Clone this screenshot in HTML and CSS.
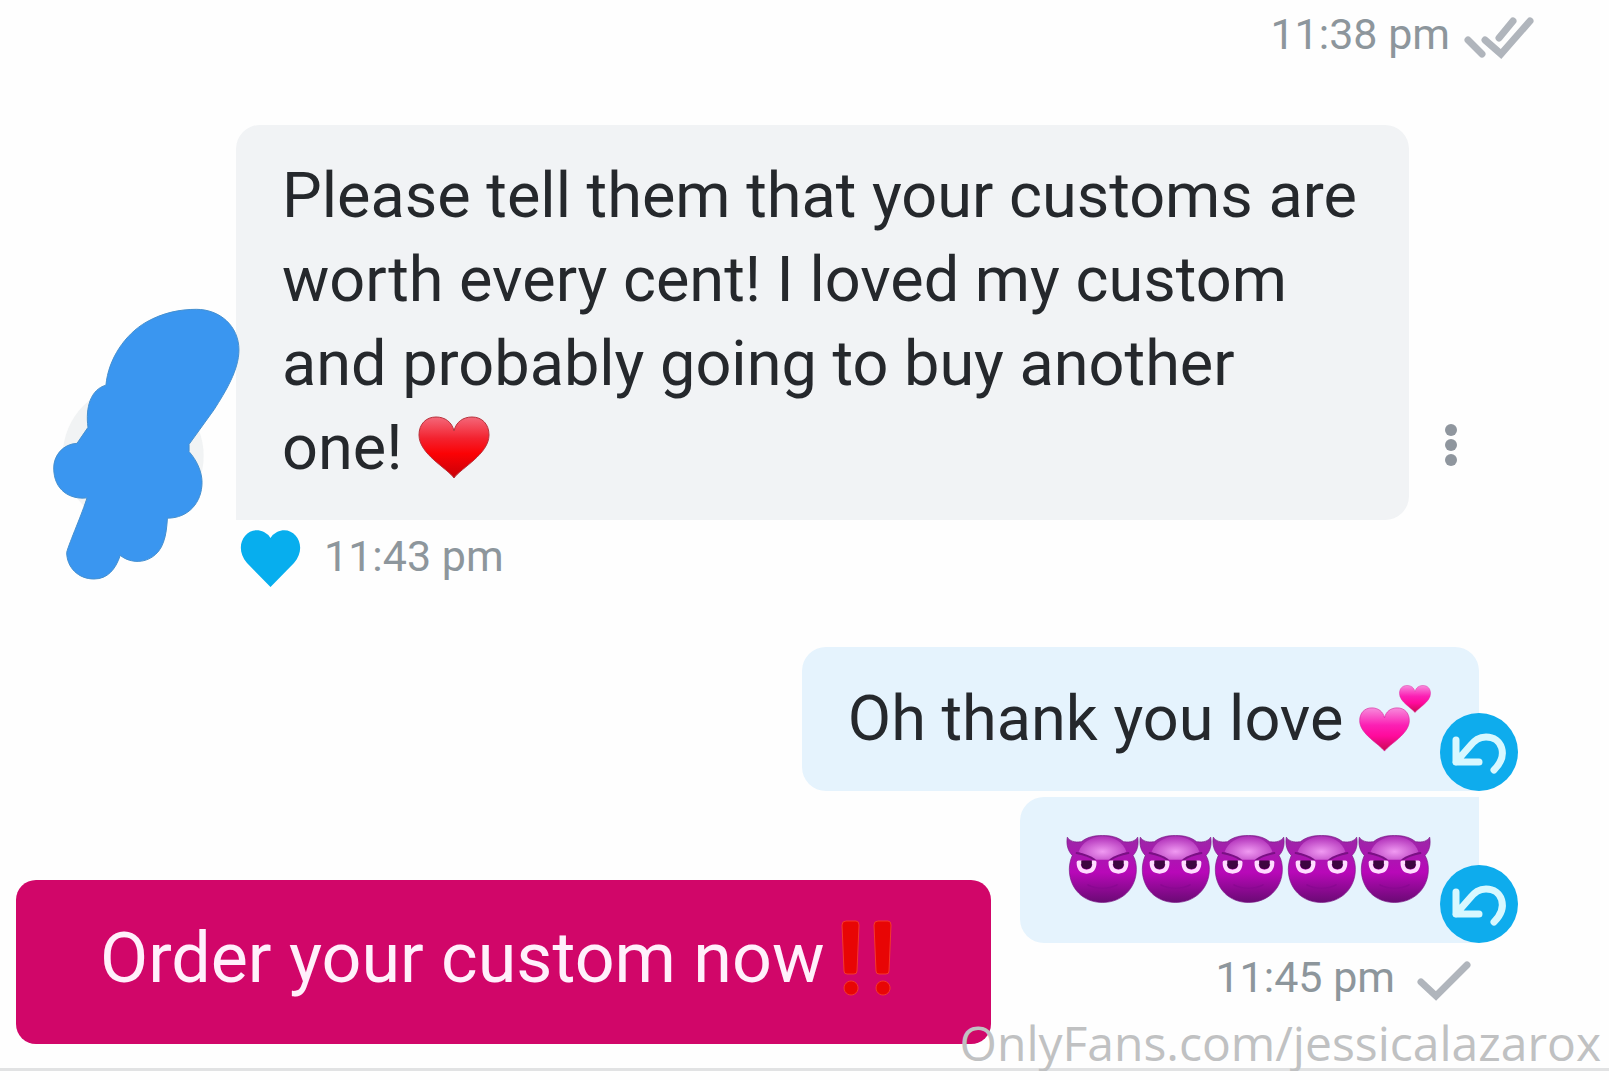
FILE: index.html
```html
<!DOCTYPE html>
<html lang="en">
<head>
<meta charset="utf-8">
<meta name="viewport" content="width=device-width, initial-scale=1">
<title>Messages</title>
<link rel="stylesheet" href="styles.css">
</head>
<body>
<svg class="defs" aria-hidden="true">
  <defs>
    <linearGradient id="red" x1="0" y1="0" x2="0" y2="1">
      <stop offset="0" stop-color="#f4687a"/><stop offset=".35" stop-color="#f3222f"/><stop offset=".6" stop-color="#fb0205"/><stop offset="1" stop-color="#c80008"/>
    </linearGradient>
    <linearGradient id="pink" x1="0" y1="0" x2="0" y2="1">
      <stop offset="0" stop-color="#f78bdc"/><stop offset=".4" stop-color="#fb20b4"/><stop offset=".65" stop-color="#ff0a9c"/><stop offset="1" stop-color="#c90a50"/>
    </linearGradient>
    <linearGradient id="violet" x1="0" y1="0" x2="0" y2="1">
      <stop offset="0" stop-color="#9a2aa6"/><stop offset=".55" stop-color="#b808b8"/><stop offset="1" stop-color="#6a0a74"/>
    </linearGradient>
    <radialGradient id="shine" cx=".5" cy=".65" r=".6">
      <stop offset="0" stop-color="#f09af2"/><stop offset="1" stop-color="#b436bc"/>
    </radialGradient>
    <symbol id="heart" viewBox="0 0 72 63">
      <path d="M36 62C29 52 1 38 1 19 1 8 8 1 18 1c9 0 16 5 18 14C38 6 45 1 54 1c10 0 17 7 17 18 0 19-28 33-35 43z"/>
    </symbol>
    <symbol id="devil" viewBox="0 0 220 210">
      <path fill="url(#violet)" stroke="#7a1684" stroke-width="2" d="M4 6c8 12 20 16 42 14C66 4 88 1 110 1s44 3 64 19c22 2 34-2 42-14 4 22-1 42-14 55 8 14 10 28 10 42 0 58-44 100-102 100S10 161 10 103c0-14 3-28 9-42C6 48 0 28 4 6z"/>
      <path fill="url(#shine)" d="M38 50c10-28 38-46 72-46s62 16 72 46c-16 12-34 18-54 24H92C72 68 54 62 38 50z"/>
      <path fill="none" stroke="#7a1084" stroke-width="6" stroke-linecap="round" d="M32 54c20 4 40 10 54 20M188 54c-20 4-40 10-54 20"/>
      <path fill="none" stroke="#ffdcff" stroke-width="12" stroke-linecap="round" stroke-linejoin="round" d="M46 82h-8c0 18 7 28 24 28s24-10 24-28h-7M141 82h-7c0 18 7 28 24 28s24-10 24-28h-8"/>
      <path fill="#3d0640" d="M46 76h32v13q-2 13-16 13T46 89zM142 76h32v13q-2 13-16 13t-16-13z"/>
      <path fill="none" stroke="#8a0892" stroke-width="4" stroke-linecap="round" d="M66 150c26 14 62 14 88 0"/>
    </symbol>
    <symbol id="reply" viewBox="0 0 78 78">
      <path fill="none" stroke="#d8f8ff" stroke-width="7" stroke-linecap="round" stroke-linejoin="round" d="M16 27v22h23M16 49L30 33C35 27 39 24 46 24c16 0 23 18 8 33"/>
    </symbol>
  </defs>
</svg>

<main class="chat">
  <div class="meta meta-sent meta-read">
    <time>11:38 pm</time>
    <svg class="ticks" viewBox="0 0 70 42" role="img" aria-label="Read"><path d="M4 22l14 14M21 22l16 14L66 3M35 20L49 3"/></svg>
  </div>

  <article class="received">
    <svg class="avatar" viewBox="60 50 580 830" role="img" aria-label="Hidden avatar">
      <circle cx="310" cy="500" r="212" fill="#f1f3f4"/>
      <path fill="#3a96f0" stroke="#4590cf" stroke-width="3" d="M228 288C235 210 285 135 350 98 400 70 450 60 500 60c70 0 128 50 128 122 0 60-40 125-75 180L478 466v22c22 24 39 60 39 92 0 60-40 108-104 108-2 28-4 50-12 72-14 42-50 58-76 58-18 0-36-4-54-18-14 42-38 71-79 71-48 0-82-36-82-80 8-30 48-120 61-164-50 6-100-22-100-90 0-38 28-72 70-74l33-48c-8-60 8-114 54-127z"/>
    </svg>
    <p class="bubble bubble-in">Please tell them that your customs are worth every cent! I loved my custom and probably going to buy another one! <svg class="emoji-heart" fill="url(#red)" stroke="#b8323c" role="img" aria-label="Red heart"><use href="#heart"/></svg></p>
    <button class="more" type="button" aria-label="More options">
      <svg viewBox="0 0 12 44"><circle cx="6" cy="7" r="6"/><circle cx="6" cy="22" r="6"/><circle cx="6" cy="37" r="6"/></svg>
    </button>
    <div class="meta meta-in">
      <button class="like" type="button" aria-label="Liked">
        <svg viewBox="0 0 59 58"><path d="M29.500 57L6 33C-9 16 6-6 23 2q4 2 6.500 6Q32 4 36 2C53-6 68 16 53 33z"/></svg>
      </button>
      <time>11:43 pm</time>
    </div>
  </article>

  <section class="latest">
    <div class="sent">
      <div class="bubble bubble-out bubble-first">
        <span>Oh thank you love <svg class="emoji-hearts" viewBox="0 0 72 67" fill="url(#pink)" stroke="#dc2aa0" role="img" aria-label="Two hearts"><use href="#heart" x="0" y="22" width="51" height="45"/><use href="#heart" x="40" y="0" width="32" height="28"/></svg></span>
        <button class="reply" type="button" aria-label="Reply"><svg><use href="#reply"/></svg></button>
      </div>
      <div class="bubble bubble-out bubble-last">
        <span class="devils" role="img" aria-label="Five smiling devils"><svg><use href="#devil"/></svg><svg><use href="#devil"/></svg><svg><use href="#devil"/></svg><svg><use href="#devil"/></svg><svg><use href="#devil"/></svg></span>
        <button class="reply" type="button" aria-label="Reply"><svg><use href="#reply"/></svg></button>
      </div>
      <div class="meta meta-sent">
        <time>11:45 pm</time>
        <svg class="tick" viewBox="0 0 54 42" role="img" aria-label="Sent"><path d="M4 21l15 14L50 4"/></svg>
      </div>
    </div>
    <button class="order" type="button">Order your custom now<svg viewBox="0 0 52 76" role="img" aria-label="!!"><g fill="#e80505" stroke="#f5382c" stroke-width="1"><path id="bar" d="M5 1h10q3 0 3 4l-2 46q0 3-3 3H6q-3 0-3-3L1 5q0-4 4-4zM10 61a7 7 0 1 0 .1 0z"/><use href="#bar" x="32"/></g></svg></button>
  </section>
  <div class="watermark">OnlyFans.com/jessicalazarox</div>
</main>
</body>
</html>
```
FILE: styles.css
```css
* {
  box-sizing: border-box;
}

body {
  margin: 0;
  background: #fefefe;
  color: #25282c;
  font-family: Roboto, "Liberation Sans", sans-serif;
}

button {
  border: 0;
  padding: 0;
  background: none;
  font: inherit;
  cursor: pointer;
}

svg {
  overflow: visible;
}

.defs {
  position: absolute;
  width: 0;
  height: 0;
}

.chat {
  position: relative;
  display: flex;
  flex-direction: column;
  gap: 65px;
  padding-top: 8px;
}

.meta {
  display: flex;
  align-items: flex-end;
  height: 52px;
  color: #8d969c;
  font-size: 43px;
  line-height: 52px;
}

.meta-sent {
  justify-content: flex-end;
}

.meta-read {
  gap: 14px;
  padding-right: 75px;
}

.ticks,
.tick {
  height: 42px;
  fill: none;
  stroke: #b0b5bc;
  stroke-width: 7px;
  stroke-linecap: round;
}

.ticks {
  width: 70px;
}

.tick {
  width: 54px;
}

.bubble {
  margin: 0;
  border-radius: 24px;
  padding: 29px 48px 30px 46px;
  font-size: 63px;
  line-height: 84px;
}

.received {
  display: grid;
  grid-template-columns: 186px minmax(0, 1fr) 84px;
  row-gap: 10px;
  padding: 0 116px 0 50px;
}

.avatar {
  grid-row: 1 / 3;
  align-self: end;
  width: 193px;
  height: 276px;
  z-index: 1;
}

.bubble-in {
  background: #f1f3f5;
  border-bottom-left-radius: 0;
}

.emoji-heart {
  width: 72px;
  height: 63px;
  vertical-align: -10px;
}

.more {
  align-self: end;
  justify-self: center;
  margin-bottom: 53px;
}

.more svg {
  display: block;
  width: 12px;
  height: 44px;
  fill: #8f969e;
}

.meta-in {
  grid-column: 2;
  align-items: flex-start;
  gap: 24px;
  padding-left: 5px;
}

.like svg {
  display: block;
  width: 59px;
  height: 58px;
  fill: #07aeee;
}

.latest {
  display: grid;
  border-bottom: 3px solid #e1e2e3;
}

.sent {
  grid-area: 1 / 1;
  display: flex;
  flex-direction: column;
  align-items: flex-end;
  gap: 6px;
  padding: 0 130px 65px 0;
}

.sent .meta {
  gap: 22px;
  margin-top: 2px;
  padding-right: 8px;
}

.bubble-out {
  position: relative;
  background: #e5f3fd;
  padding-top: 30px;
}

.bubble-first {
  border-bottom-right-radius: 0;
}

.bubble-last {
  border-top-right-radius: 0;
  border-bottom-right-radius: 0;
}

.emoji-hearts {
  width: 72px;
  height: 67px;
  vertical-align: -12px;
}

.devils {
  display: flex;
  align-items: center;
  height: 86px;
}

.devils svg {
  width: 73px;
  height: 70px;
}

.reply {
  position: absolute;
  right: -39px;
  bottom: 0;
  width: 78px;
  height: 78px;
  border-radius: 50%;
  background: #0eaced;
}

.reply svg {
  display: block;
  width: 78px;
  height: 78px;
}

.order {
  grid-area: 1 / 1;
  align-self: end;
  justify-self: start;
  display: flex;
  align-items: center;
  gap: 16px;
  margin: 0 0 24px 16px;
  border-radius: 20px;
  padding: 36px 98px 44px 84px;
  background: #d10669;
  color: #fff0fb;
  font-size: 70px;
  line-height: 84px;
}

.order svg {
  width: 52px;
  height: 76px;
}

.watermark {
  position: absolute;
  right: 8px;
  bottom: -6px;
  color: #c0c1c2;
  font-family: "Open Sans", "Noto Sans", sans-serif;
  font-size: 48px;
  font-weight: 400;
  line-height: 68px;
}
```
